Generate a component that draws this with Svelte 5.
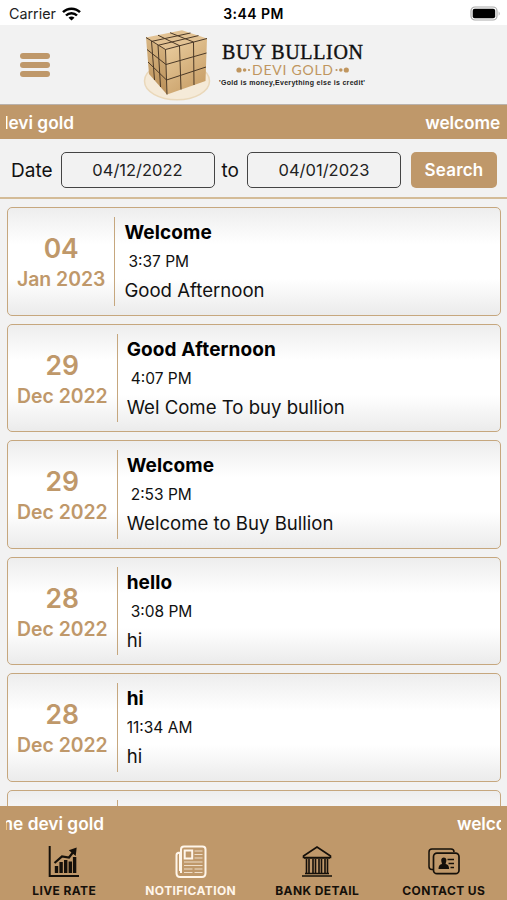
<script>
  let from = "04/12/2022";
  let to = "04/01/2023";
  let active = "NOTIFICATION";

  const tabs = ["LIVE RATE", "NOTIFICATION", "BANK DETAIL", "CONTACT US"];

  const notifications = [
    { day: "04", month: "Jan 2023", title: "Welcome", time: "3:37 PM", body: "Good Afternoon" },
    { day: "29", month: "Dec 2022", title: "Good Afternoon", time: "4:07 PM", body: "Wel Come To buy bullion" },
    { day: "29", month: "Dec 2022", title: "Welcome", time: "2:53 PM", body: "Welcome to Buy Bullion" },
    { day: "28", month: "Dec 2022", title: "hello", time: "3:08 PM", body: "hi" },
    { day: "28", month: "Dec 2022", title: "hi", time: "11:34 AM", body: "hi" },
    { day: "", month: "Dec 2022", title: "", time: "", body: "" }
  ];
</script>

<main class="app">
  <div class="status">
    <div class="status-side">
      <span class="carrier">Carrier</span>
      <svg width="19" height="14" viewBox="0 0 19 14" fill="none" stroke="#000" stroke-width="2.5">
        <path d="M1 5.2a12 12 0 0 1 17 0" />
        <path d="M4 8.5a7.7 7.7 0 0 1 11 0" />
        <path d="M9.5 13.6 6.5 10.7a4.2 4.2 0 0 1 6 0z" fill="#000" stroke="none" />
      </svg>
    </div>
    <span class="clock">3:44 PM</span>
    <div class="status-side status-side--right">
      <svg width="32" height="16" viewBox="0 0 32 16">
        <rect x="2" y="1" width="26" height="13" rx="4" fill="#fff" stroke="#aaa" stroke-width="1.2" />
        <rect x="3.7" y="2.8" width="22.5" height="9.4" rx="2" />
        <path d="M29.7 5.2q2 2.3 0 4.6z" fill="#aaa" />
      </svg>
    </div>
  </div>

  <header class="header">
    <button class="menu" aria-label="Menu">
      <span></span>
      <span></span>
      <span></span>
    </button>
    <svg class="logo" width="230" height="79" viewBox="138 25 230 79">
      <defs>
        <linearGradient id="face" x1="0" y1="0" x2="0.6" y2="1">
          <stop offset="0" stop-color="#ecd0a2" />
          <stop offset="1" stop-color="#c9a069" />
        </linearGradient>
        <linearGradient id="side" x1="0" y1="0" x2="0" y2="1">
          <stop offset="0" stop-color="#d9b784" />
          <stop offset="1" stop-color="#b98f58" />
        </linearGradient>
      </defs>
      <ellipse cx="177" cy="81" rx="32.5" ry="18.8" fill="#f5ead8" stroke="#ead8ba" stroke-width="1.5" />
      <path d="M146 37.5 182 30.3 207 38.5 165.5 49.5z" fill="#e2c293" />
      <path d="M146 37.5 165.5 49.5 167 94.5 149 74z" fill="url(#side)" />
      <path d="M165.5 49.5 207 38.5 205.5 81 167 94.5z" fill="url(#face)" />
      <g fill="none" stroke="#4a3826" stroke-width="1">
        <path d="M146 37.5 165.5 49.5 207 38.5M165.5 49.5 167 94.5" />
        <path d="M158 35.2 179.5 45.7 181 89.5M170 32.7 193.5 42 194 85" />
        <path d="M152 41.3 190.5 33M158.5 45.2 198.5 35.6" />
        <path d="M151.5 41 154.5 80M158 45 160.5 87" />
        <path d="M147 49.5 166 64.500 206.5 53M148 62 166.5 80 206 67" />
      </g>
      <text class="logo-name" x="222" y="59" textLength="141">BUY BULLION</text>
      <text class="logo-sub" x="252" y="74.500" textLength="81">DEVI GOLD</text>
      <g fill="#c0965f">
        <circle cx="239" cy="70" r="2.6" />
        <circle cx="244.6" cy="70" r="1.8" />
        <circle cx="249" cy="70" r="1.1" />
        <circle cx="336.5" cy="70" r="1.1" />
        <circle cx="340.8" cy="70" r="1.8" />
        <circle cx="346.3" cy="70" r="2.6" />
      </g>
      <text class="logo-motto" x="219" y="85" textLength="146">'Gold is money,Everything else is credit'</text>
    </svg>
  </header>

  <div class="ticker">
    <div class="ticker-window">
      <span class="ticker-out">welcome devi gold</span>
      <span class="ticker-in">welcome</span>
    </div>
  </div>

  <form class="filter" on:submit|preventDefault>
    <span class="label">Date</span>
    <input bind:value={from} aria-label="From date" />
    <span class="label">to</span>
    <input bind:value={to} aria-label="To date" />
    <button class="search">Search</button>
  </form>

  <section class="list">
    {#each notifications as item}
      <article class="card">
        <div class="date">
          <span class="day">{item.day}</span>
          <span class="month">{item.month}</span>
        </div>
        <div class="content">
          <h2>{item.title}</h2>
          <time class:wide={item.time.length > 7}>{item.time}</time>
          <p>{item.body}</p>
        </div>
      </article>
    {/each}
  </section>

  <footer class="footer">
    <div class="ticker ticker--bottom">
      <div class="ticker-window">
        <span class="ticker-out">welcome devi gold</span>
        <span class="ticker-in ticker-in--cut">welcome</span>
      </div>
    </div>
    <nav class="tabs">
      {#each tabs as tab}
        <button class="tab" class:tab--active={tab === active} on:click={() => (active = tab)}>
          <svg width="32" height="34" viewBox="0 0 32 34" fill="none" stroke="currentColor">
            {#if tab === "LIVE RATE"}
              <path d="M1.7 1v30H31" stroke-width="2" />
              <path d="M8.5 28v-7M13.1 28V17M17.7 28V15M22.3 28V16.5M26.6 28V12" stroke-width="3.4" />
              <path d="M6.5 18 14 11.5l7 1L26 6" stroke-width="2.2" />
              <path d="M20.8 5.2 28.7 2.5l-1 8.500z" fill="currentColor" stroke="none" />
            {:else if tab === "NOTIFICATION"}
              <path d="M6 28V4.5q0-3 3-3h18.5q3 0 3 3V28q0 4-3.5 4H5q-3.5 0-3.5-4V10q0-2.5 3.5-2.500V26" stroke-width="2" />
              <rect x="9.700" y="5.5" width="7.5" height="8" stroke-width="2" />
              <path
                d="M19.5 6h8M19.5 9.5h8M19.5 13h8M9 17h18.5M9 20.5h18.5M9 24h8.500M19.500 24h8M9 27.5h8.500M19.500 27.5h8"
                stroke-width="1"
                opacity="0.75"
              />
            {:else if tab === "BANK DETAIL"}
              <path d="M2.5 11 16 2l13.5 9v1.5h-27z" stroke-width="1.6" />
              <path d="M3 13h26M4 28.5h24M1 31h30" stroke-width="1.6" />
              <path
                d="M5.5 14v14M8 14v14M12 14v14M14.5 14v14M18 14v14M20.5 14v14M24 14v14M26.5 14v14"
                stroke-width="1.6"
              />
            {:else}
              <path d="M5 24.5H4q-3 0-3-3V7q0-3 3-3h19q3 0 3 3" stroke-width="1.5" />
              <rect x="5.5" y="8.2" width="25.5" height="20.5" rx="3.5" stroke-width="1.7" />
              <path d="M10.500 24q0-4.500 3.500-5-2.300-6.500 1.800-6.500t1.800 6.500q3.500.5 3.500 5z" fill="currentColor" stroke="none" />
              <path d="M19.5 14.5h6.5M20.5 18.5H26M22.500 22.5H26" stroke-width="1.6" />
            {/if}
          </svg>
          <span>{tab}</span>
        </button>
      {/each}
    </nav>
  </footer>
</main>

<style>
  :global(body) {
    margin: 0;
  }

  .app {
    --gold: #bf986a;
    display: flex;
    flex-direction: column;
    width: 507px;
    height: 900px;
    overflow: hidden;
    background: #f2f2f2;
    color: #111;
    font-family: Inter, "Liberation Sans", sans-serif;
  }

  button {
    padding: 0;
    border: 0;
    background: none;
    font-family: inherit;
    cursor: pointer;
  }

  .status {
    display: flex;
    align-items: center;
    flex: none;
    box-sizing: border-box;
    height: 25px;
    padding: 2px 6px 0 9px;
    background: #fff;
  }

  .status-side {
    display: flex;
    align-items: center;
    flex: 1;
    gap: 6px;
  }

  .status-side--right {
    justify-content: flex-end;
  }

  .carrier {
    font-size: 14.3px;
    color: #222;
  }

  .clock {
    margin-right: 3px;
    font-size: 14px;
    font-weight: 600;
    letter-spacing: 0.45px;
    color: #000;
  }

  .header {
    display: flex;
    flex: none;
    box-sizing: border-box;
    height: 80px;
    border-bottom: 1px solid #b9b2ac;
  }

  .menu {
    display: flex;
    flex-direction: column;
    align-self: center;
    gap: 3px;
    width: 30px;
    margin: 0 88px 0 20px;
  }

  .menu span {
    height: 6px;
    border-radius: 3px;
    background: var(--gold);
  }

  .logo-name {
    font: 20px "Liberation Serif", serif;
    fill: #111;
    stroke: #111;
    stroke-width: 0.4;
  }

  .logo-sub {
    font: 14px Lato, sans-serif;
    fill: #c0965f;
  }

  .logo-motto {
    font: 700 7px "Liberation Sans", sans-serif;
    fill: #222;
  }

  .ticker {
    flex: none;
    box-sizing: border-box;
    height: 34px;
    padding: 1px 6px 0;
    background: var(--gold);
    color: #fff;
    font-size: 17.3px;
    font-weight: 600;
    line-height: 34px;
  }

  .ticker-window {
    display: flex;
    justify-content: space-between;
    height: 33px;
    overflow: hidden;
    white-space: nowrap;
  }

  .ticker-out {
    display: flex;
    justify-content: flex-end;
    width: 68px;
  }

  .ticker-in {
    margin-right: 1px;
    letter-spacing: -0.1px;
  }

  .ticker-in--cut {
    width: 44px;
    margin-right: 0;
  }

  .filter {
    display: flex;
    align-items: center;
    flex: none;
    box-sizing: border-box;
    height: 60px;
    padding: 4px 10px 0 11px;
    border-bottom: 2px solid #d4bc98;
  }

  .label {
    font-size: 19px;
  }

  input {
    box-sizing: border-box;
    width: 154px;
    height: 36px;
    margin: 0 7px 0 8px;
    padding: 0;
    border: 1.5px solid #444;
    border-radius: 5px;
    background: transparent;
    color: #222;
    font-family: inherit;
    font-size: 16.5px;
    text-align: center;
  }

  .search {
    width: 86px;
    height: 36px;
    margin-left: auto;
    border-radius: 5px;
    background: var(--gold);
    color: #fff;
    font-size: 17px;
    font-weight: 600;
    letter-spacing: 0.2px;
  }

  .list {
    display: flex;
    flex-direction: column;
    flex: 1;
    gap: 8px;
    min-height: 0;
    padding: 8px 6px 0 7px;
    overflow: hidden;
  }

  .card {
    display: flex;
    flex: none;
    box-sizing: border-box;
    height: 108.5px;
    padding: 9px;
    border: 1.5px solid #c6a77e;
    border-radius: 5px;
    background: linear-gradient(#ededed, #fff 34%, #fff 66%, #ebebeb);
  }

  .date {
    display: flex;
    flex-direction: column;
    align-items: center;
    padding: 16px 9px 0 0;
    border-right: 1.5px solid #c6a77e;
    color: var(--gold);
    font-weight: 600;
  }

  .day {
    height: 31px;
    font-size: 26.5px;
    line-height: 31px;
  }

  .month {
    font-size: 19.4px;
    line-height: 30px;
  }

  .content {
    padding: 1px 0 0 9px;
    color: #111;
  }

  h2,
  p,
  time {
    display: block;
    height: 29px;
    margin: 0;
    line-height: 29px;
    white-space: nowrap;
  }

  h2 {
    color: #000;
    font-size: 19px;
    font-weight: 700;
    letter-spacing: 0.1px;
  }

  time {
    padding-left: 4px;
    font-size: 15.5px;
  }

  time.wide {
    padding-left: 0;
  }

  p {
    font-size: 18.6px;
  }

  .footer {
    flex: none;
    height: 94px;
    background: var(--gold);
  }

  .ticker--bottom {
    height: 35px;
  }

  .ticker--bottom .ticker-out {
    width: 98px;
  }

  .tabs {
    display: flex;
    padding-left: 1px;
  }

  .tab {
    display: flex;
    flex-direction: column;
    align-items: center;
    flex: none;
    gap: 3px;
    width: 126.5px;
    padding-top: 4px;
    color: #15100a;
    font-size: 12px;
    font-weight: 700;
    letter-spacing: 0.4px;
    line-height: 17px;
  }

  .tab--active {
    color: #fff6ea;
  }
</style>
